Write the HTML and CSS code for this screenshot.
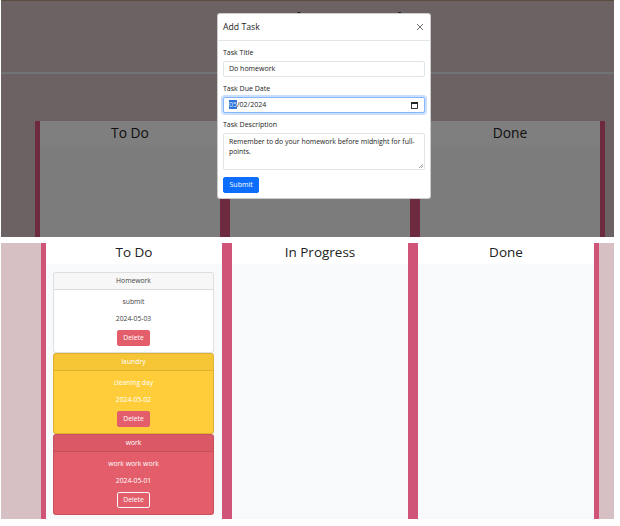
FILE: index.html
```html
<!DOCTYPE html>
<html lang="en">
<head>
<meta charset="utf-8">
<title>Task Board</title>
<link rel="stylesheet" href="styles.css">
</head>
<body>
<section class="shot shot-modal">
  <div class="page">
    <header class="page-header"><h1 class="page-title">Task Board</h1></header>
    <div class="board board-top">
      <div class="col"><h2 class="col-head">To Do</h2></div>
      <div class="col"><h2 class="col-head">In Progress</h2></div>
      <div class="col"><h2 class="col-head">Done</h2></div>
    </div>
  </div>
  <div class="backdrop"></div>
  <div class="modal">
    <div class="modal-header">
      <span class="modal-title">Add Task</span>
      <svg class="close" width="8" height="8" viewBox="0 0 8 8"><path d="M1 1L7 7M7 1L1 7" stroke="#5f5f5f" stroke-width="0.9" fill="none"/></svg>
    </div>
    <div class="modal-body">
      <div class="group">
        <div class="label">Task Title</div>
        <div class="control">Do homework</div>
      </div>
      <div class="group">
        <div class="label">Task Due Date</div>
        <div class="control control-date focus"><span><span class="sel">05</span>/02/2024</span>
          <svg width="7" height="7" viewBox="0 0 7 7"><rect x="0.5" y="0.5" width="6" height="6" fill="none" stroke="#222" stroke-width="0.9"/><rect x="0" y="0" width="7" height="2" fill="#222"/></svg>
        </div>
      </div>
      <div class="group">
        <div class="label">Task Description</div>
        <div class="control control-area">Remember to do your homework before midnight for full-points.
          <svg class="grip" width="4" height="4" viewBox="0 0 4 4"><path d="M4 0L0 4M4 2L2 4" stroke="#777" stroke-width="0.7"/></svg>
        </div>
      </div>
      <button class="btn btn-primary">Submit</button>
    </div>
  </div>
</section>

<section class="shot shot-board">
  <div class="board board-main">
    <div class="col">
      <h2 class="col-head">To Do</h2>
      <div class="col-body">
        <div class="card">
          <div class="card-header">Homework</div>
          <div class="card-body">
            <p>submit</p>
            <p>2024-05-03</p>
            <button class="btn btn-danger">Delete</button>
          </div>
        </div>
        <div class="card card-warning">
          <div class="card-header">laundry</div>
          <div class="card-body">
            <p>cleaning day</p>
            <p>2024-05-02</p>
            <button class="btn btn-danger">Delete</button>
          </div>
        </div>
        <div class="card card-danger">
          <div class="card-header">work</div>
          <div class="card-body">
            <p>work work work</p>
            <p>2024-05-01</p>
            <button class="btn btn-danger btn-light-border">Delete</button>
          </div>
        </div>
      </div>
    </div>
    <div class="col">
      <h2 class="col-head">In Progress</h2>
      <div class="col-body"></div>
    </div>
    <div class="col">
      <h2 class="col-head">Done</h2>
      <div class="col-body"></div>
    </div>
  </div>
</section>
</body>
</html>
```
FILE: styles.css
```css
* { box-sizing: border-box; margin: 0; padding: 0; }

body {
  width: 620px;
  background: #fff;
  font-family: "Open Sans", "Noto Sans", sans-serif;
  color: #212529;
}

.shot {
  position: relative;
  overflow: hidden;
  width: 613px;
  margin-left: 1px;
}

.shot-modal { height: 237px; background: #d8c4c6; }
.shot-board { height: 276px; margin-top: 6px; background: #d7c0c4; }

/* page under the modal */
.page { border-top: 1px solid #b69876; }
.page-header {
  height: 73px;
  padding-top: 4px;
  border-bottom: 2px solid #e0e8ea;
}
.page-title {
  font-size: 30px;
  font-weight: 400;
  line-height: 36px;
  text-align: center;
  padding-left: 36px;
  color: #222;
}

.board { display: flex; }
.board-top { margin-top: 47px; padding-left: 34px; }
.board-main { padding-left: 40px; height: 100%; }

.col {
  display: flex;
  flex-direction: column;
  background: #f8f9fa;
  border-left: 5px solid #cf5478;
  border-right: 5px solid #cf5478;
}
.board-top .col { width: 190px; height: 200px; border-color: #dc5680; }
.board-main .col { width: 186px; height: 100%; }

.col-head {
  background: #fff;
  text-align: center;
  font-weight: 400;
  color: #222;
}
.board-top .col-head { height: 24px; font-size: 13.8px; line-height: 24px; }
.board-main .col-head { height: 21px; font-size: 13.5px; line-height: 19px; }

.col-body { padding: 8px 8px 0 7px; flex: 1; }

.backdrop {
  position: absolute;
  inset: 0;
  background: rgba(0, 0, 0, 0.5);
}

/* modal */
.modal {
  position: absolute;
  left: 216px;
  top: 13px;
  width: 214px;
  background: #fff;
  border: 1px solid rgba(0, 0, 0, 0.2);
  border-radius: 3px;
  font-size: 7px;
}
.modal-header {
  height: 27px;
  padding: 0 6px 0 5px;
  display: flex;
  align-items: center;
  justify-content: space-between;
  border-bottom: 1px solid #e3e6ea;
}
.modal-title { font-size: 8.7px; color: #222; }

.modal-body { padding: 7px 5px 5px; }
.group { margin-bottom: 7px; }
.label {
  font-size: 7px;
  line-height: 10px;
  margin-bottom: 3px;
  color: #222;
}
.control {
  height: 16px;
  border: 1px solid #e1e4e8;
  border-radius: 2px;
  padding: 0 5px;
  font-size: 7px;
  line-height: 14px;
  color: #222;
}
.control-date {
  display: flex;
  align-items: center;
  justify-content: space-between;
  padding-right: 6px;
}
.focus {
  border-color: #86b7fe;
  box-shadow: 0 0 0 2px rgba(13, 110, 253, 0.22);
}
.sel { background: #2f74d8; color: #dce8ff; }
.control-area {
  position: relative;
  height: 37px;
  padding: 3px 4px 2px 5px;
  font-size: 6.9px;
  line-height: 10px;
}
.grip { position: absolute; right: 1px; bottom: 1px; }

.btn {
  display: block;
  height: 16px;
  border: 1px solid transparent;
  border-radius: 2px;
  font-family: inherit;
  font-size: 7px;
  line-height: 14px;
  color: #fff;
}
.btn-primary { background: #0d6efd; border-color: #0d6efd; padding: 0 5.5px; }
.btn-danger { background: #e35d6a; border-color: #e35d6a; padding: 0 5.5px; font-size: 6.8px; margin: 0 auto; }
.btn-light-border { border-color: #f8f9fa; }

/* cards */
.card {
  border: 1px solid rgba(0, 0, 0, 0.125);
  border-radius: 3px;
  overflow: hidden;
  text-align: center;
  font-size: 6.8px;
  background: #fff;
  color: #444;
}
.card-header {
  height: 17px;
  line-height: 16px;
  border-bottom: 1px solid rgba(0, 0, 0, 0.1);
  background: rgba(0, 0, 0, 0.03);
}
.card-body { padding: 6px 0; }
.card-body p { line-height: 11px; margin-bottom: 6px; }

.card-warning { background: #ffcd39; color: #fff; }
.card-danger { background: #e35d6a; color: #fff; }
.card-warning .card-header,
.card-danger .card-header { background: rgba(0, 0, 0, 0.035); }
```
